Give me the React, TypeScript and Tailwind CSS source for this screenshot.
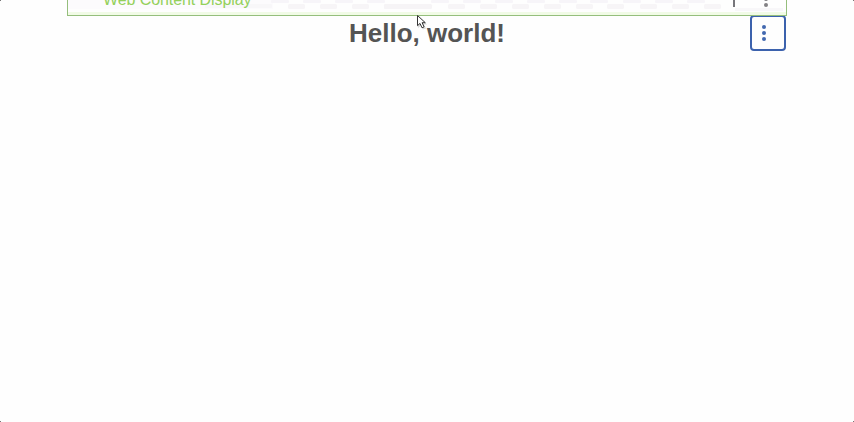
const darkCells = [288, 320, 352, 384, 448, 480, 512, 544, 576, 607, 640, 672, 704];

function Dots({ className, color }: { className: string; color: string }) {
  return (
    <svg className={className} width="4" height="16" viewBox="0 0 4 16" fill={color}>
      <circle cx="2" cy="2" r="2" />
      <circle cx="2" cy="8" r="2" />
      <circle cx="2" cy="14" r="2" />
    </svg>
  );
}

function Checker() {
  return (
    <svg className="absolute inset-0" width="718" height="15" viewBox="68 0 718 15">
      <rect x="68" y="0" width="205" height="9" fill="#fcfbfd" />
      <rect x="205" y="4" width="67" height="4" rx="1" fill="#f8f7f9" />
      {darkCells.map((x) => (
        <g key={x}>
          <rect x={x} y="4" width="17" height="5" rx="1.5" fill="#f7f5f7" />
          <rect x={x - 17} y="0" width="18" height="3" rx="1" fill="#f7f5f9" />
        </g>
      ))}
      <rect x="384" y="4" width="48" height="5" rx="1.5" fill="#f6f4f6" />
      <rect x="735" y="8" width="48" height="3" fill="#f8f7f9" />
      <rect x="68" y="12" width="718" height="3" fill="#f1fbe6" />
    </svg>
  );
}

export default function App() {
  return (
    <div className="relative h-[422px] w-[854px] overflow-hidden bg-[#fefefe] font-['Liberation_Sans',Arial,sans-serif]">
      <header className="relative mx-[67px] flex h-4 w-[720px] items-end overflow-hidden border-x border-b border-[#95be7c]">
        <Checker />
        <span className="relative mb-px ml-[35px] whitespace-nowrap text-[16px] leading-[20px] tracking-[-0.08px] text-[#94d05b] -translate-y-[4px]">
          Web Content Display
        </span>
        <span className="relative mb-2 ml-auto h-[14px] w-[2px] bg-[#77767b]" />
        <Dots className="relative mb-2 ml-[29px] mr-[18px] shrink-0" color="#828184" />
      </header>
      <main className="ml-[67px] flex w-[720px] items-start">
        <h1 className="ml-[37px] flex-1 whitespace-nowrap pt-[2px] text-center text-[26px] font-bold leading-[30px] text-[#545454]">
          Hello, world!
        </h1>
        <button
          aria-label="Options"
          className="-mt-px mr-px flex h-9 w-9 shrink-0 rounded-[4px] border-2 border-[#3c62ad] bg-[#fefefe] pl-[10px] pt-2"
        >
          <Dots className="" color="#4268af" />
        </button>
      </main>
      <svg className="absolute left-[416px] top-[14px]" width="12" height="18" viewBox="0 0 12 18">
        <path d="M2 2v12l3-2.5 2 4 3-1-2-4h3z" fill="#999" opacity=".35" />
        <path d="M1.5 1.5v10.2l2.5-2.3 2 4.4 2.1-.9-2-4.2h3.2z" fill="#fff" stroke="#333" strokeWidth="1" />
      </svg>
      <i className="absolute left-0 top-0 h-px w-px bg-[#777]" />
      <i className="absolute right-0 top-0 h-px w-px bg-[#777]" />
      <i className="absolute bottom-0 left-0 h-px w-px bg-[#777]" />
      <i className="absolute bottom-0 right-0 h-px w-px bg-[#777]" />
    </div>
  );
}
